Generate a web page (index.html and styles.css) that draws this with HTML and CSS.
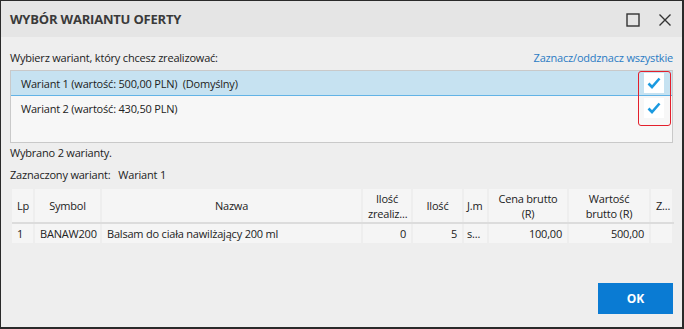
FILE: index.html
```html
<!DOCTYPE html>
<html lang="pl">
<head>
  <meta charset="UTF-8">
  <meta name="viewport" content="width=device-width, initial-scale=1.0">
  <title>Wybór wariantu oferty</title>
  <link rel="stylesheet" href="styles.css">
</head>
<body>

  <div class="dialog">
    <div class="titlebar">
      <h1>WYBÓR WARIANTU OFERTY</h1>
      <div class="win-buttons">
        <svg width="14" height="14" viewBox="0 0 14 14">
          <rect x="1" y="1" width="12" height="12" fill="none" stroke="#333" stroke-width="1.4"/>
        </svg>
        <svg width="14" height="14" viewBox="0 0 14 14">
          <path d="M1.5 1.5 L12.5 12.5 M12.5 1.5 L1.5 12.5" stroke="#333" stroke-width="1.4"/>
        </svg>
      </div>
    </div>

    <div class="content">
      <div class="list-head">
        <span>Wybierz wariant, który chcesz zrealizować:</span>
        <a href="#" class="link">Zaznacz/oddznacz wszystkie</a>
      </div>

      <div class="variants">
        <div class="variant selected">
          <span>Wariant 1 (wartość: 500,00 PLN)&nbsp; (Domyślny)</span>
          <span class="check">
            <svg width="14" height="12" viewBox="0 0 14 12"><path d="M1.5 6.5 L5 10 L12.5 1.5" fill="none" stroke="#1b9ae0" stroke-width="2.6"/></svg>
          </span>
        </div>
        <div class="variant">
          <span>Wariant 2 (wartość: 430,50 PLN)</span>
          <span class="check">
            <svg width="14" height="12" viewBox="0 0 14 12"><path d="M1.5 6.5 L5 10 L12.5 1.5" fill="none" stroke="#1b9ae0" stroke-width="2.6"/></svg>
          </span>
        </div>
        <div class="highlight"></div>
      </div>

      <p class="info">Wybrano 2 warianty.</p>
      <p class="info">Zaznaczony wariant:&nbsp;&nbsp; Wariant 1</p>

      <table class="items">
        <thead>
          <tr>
            <th class="c-lp">Lp</th>
            <th class="c-sym">Symbol</th>
            <th class="c-name">Nazwa</th>
            <th class="c-real">Ilość<br>zrealiz...</th>
            <th class="c-qty">Ilość</th>
            <th class="c-jm">J.m</th>
            <th class="c-price">Cena brutto<br>(R)</th>
            <th class="c-value">Wartość<br>brutto (R)</th>
            <th class="c-z">Z...</th>
          </tr>
        </thead>
        <tbody>
          <tr>
            <td>1</td>
            <td>BANAW200</td>
            <td>Balsam do ciała nawilżający 200 ml</td>
            <td class="num">0</td>
            <td class="num">5</td>
            <td class="jm">s...</td>
            <td class="num">100,00</td>
            <td class="num">500,00</td>
            <td></td>
          </tr>
        </tbody>
      </table>
    </div>

    <div class="footer">
      <button type="button" class="ok">OK</button>
    </div>
  </div>

</body>
</html>
```

FILE: styles.css
```css
body {
  margin: 0;
  font-family: "Open Sans", "Noto Sans", sans-serif;
  font-size: 11px;
  letter-spacing: -0.2px;
  color: #222;
}
.dialog {
  width: 684px;
  height: 329px;
  box-sizing: border-box;
  border: 1px solid #2a2a2a;
  border-right-width: 2px;
  border-bottom-width: 2px;
  background-color: #eeeeee;
  display: flex;
  flex-direction: column;
}
.titlebar {
  height: 36px;
  background-color: #e5e5e5;
  display: flex;
  align-items: center;
  justify-content: space-between;
  padding: 0 10px 0 9px;
}
.titlebar h1 {
  margin: 0;
  font-size: 13px;
  font-weight: 700;
  color: #3a3a3a;
  letter-spacing: -0.2px;
}
.win-buttons {
  display: flex;
  gap: 18px;
  padding-top: 2px;
}
.content {
  flex: 1;
  padding: 13px 9px 0 9px;
}
.list-head {
  display: flex;
  justify-content: space-between;
  align-items: baseline;
  height: 20px;
}
.link {
  color: #2b7bc4;
  text-decoration: none;
}
.variants {
  position: relative;
  height: 71px;
  border: 1px solid #c9c9c9;
  background-color: #f7f7f7;
}
.variant {
  display: flex;
  align-items: center;
  justify-content: space-between;
  height: 24px;
  padding: 0 8px 0 10px;
  border-bottom: 1px solid transparent;
}
.variant.selected {
  background-color: #c6e2f1;
  border-bottom-color: #62b3e6;
}
.check {
  width: 20px;
  height: 20px;
  background-color: #fff;
  display: flex;
  align-items: center;
  justify-content: center;
}
.highlight {
  position: absolute;
  top: 0;
  right: 1px;
  width: 31px;
  height: 53px;
  border: 1.5px solid #e3202c;
  border-radius: 3px;
}
.info {
  margin: 2px 0 0 0;
  height: 17px;
}
.info + .info {
  margin-top: 5px;
}
.items {
  margin-top: 5px;
  margin-left: 2px;
  width: 661px;
  border-collapse: collapse;
  table-layout: fixed;
}
.items th,
.items td {
  box-sizing: border-box;
  background-color: #f5f5f5;
  border-right: 2px solid #eeeeee;
  padding: 0 5px;
  white-space: nowrap;
  overflow: hidden;
}
.items th {
  height: 34px;
  font-weight: 400;
  line-height: 15px;
  text-align: center;
  border-bottom: 2px solid #dcdcdc;
}
.items td {
  height: 20px;
  border-top: 1px solid #eeeeee;
}
.items .num {
  text-align: right;
}
.items .jm {
  padding: 0 3px;
}
.c-lp { width: 22px; text-align: left !important; }
.c-sym { width: 67px; }
.c-name { width: 261px; }
.c-real { width: 50px; }
.c-qty { width: 51px; }
.c-jm { width: 25px; padding: 0 3px !important; text-align: left !important; }
.c-price { width: 80px; }
.c-value { width: 82px; }
.c-z { width: 23px; text-align: left !important; }
.footer {
  display: flex;
  justify-content: flex-end;
  padding: 0 9px 13px 0;
}
.ok {
  width: 75px;
  height: 31px;
  border: none;
  background-color: #0a7bd3;
  color: #fff;
  font-family: "Open Sans", "Noto Sans", sans-serif;
  font-weight: 700;
  font-size: 12px;
}
```
